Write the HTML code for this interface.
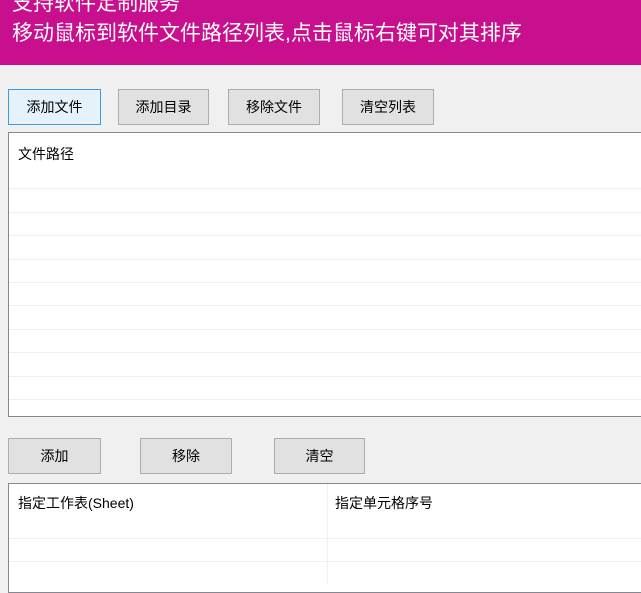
<!DOCTYPE html>
<html><head><meta charset="utf-8"><style>
body{margin:0;width:641px;height:580px;overflow:hidden;background:#f0f0f0;font-family:"Liberation Sans","Noto Sans CJK SC",sans-serif;position:relative}
.hdr{position:absolute;left:0;top:0;width:641px;height:65px;background:#c8108f;color:#fff;font-size:21px;line-height:24px}
.hdr div{position:absolute;left:12px;white-space:nowrap}
.btn{position:absolute;height:34px;background:#e1e1e1;border:1px solid #adadad;box-sizing:border-box;font-size:14px;color:#000;display:flex;align-items:center;justify-content:center}
.btn.act{background:#e5f1fb;border-color:#3c9be0}
.box{position:absolute;left:8px;right:-2px;background:#fff;border:1px solid #828790;box-sizing:border-box}
.line{position:absolute;left:0;right:0;height:1px;background:#f0f0f0}
.t{position:absolute;font-size:14px;color:#000;white-space:nowrap}
</style></head><body>
<div class="hdr"><div style="top:-8px">支持软件定制服务</div><div style="top:22px">移动鼠标到软件文件路径列表,点击鼠标右键可对其排序</div></div>
<div class="btn act" style="left:8px;top:89px;width:93px;height:36px">添加文件</div>
<div class="btn" style="left:118px;top:89px;width:91px;height:36px">添加目录</div>
<div class="btn" style="left:228px;top:89px;width:92px;height:36px">移除文件</div>
<div class="btn" style="left:342px;top:89px;width:92px;height:36px">清空列表</div>
<div class="box" style="top:132px;height:285px">
<div class="t" style="left:9px;top:11px">文件路径</div>
<div class="line" style="top:55px"></div><div class="line" style="top:79px"></div><div class="line" style="top:102px"></div><div class="line" style="top:126px"></div><div class="line" style="top:149px"></div><div class="line" style="top:172px"></div><div class="line" style="top:196px"></div><div class="line" style="top:219px"></div><div class="line" style="top:243px"></div><div class="line" style="top:266px"></div>
</div>
<div class="btn" style="left:8px;top:438px;width:93px;height:36px">添加</div>
<div class="btn" style="left:140px;top:438px;width:92px;height:36px">移除</div>
<div class="btn" style="left:274px;top:438px;width:91px;height:36px">清空</div>
<div class="box" style="top:483px;height:110px">
<div class="t" style="left:9px;top:9px">指定工作表(Sheet)</div>
<div class="t" style="left:326px;top:9px">指定单元格序号</div>
<div style="position:absolute;left:318px;top:0;width:1px;height:100px;background:#f0f0f0"></div>
<div class="line" style="top:54px"></div><div class="line" style="top:77px"></div>
</div>
</body></html>
